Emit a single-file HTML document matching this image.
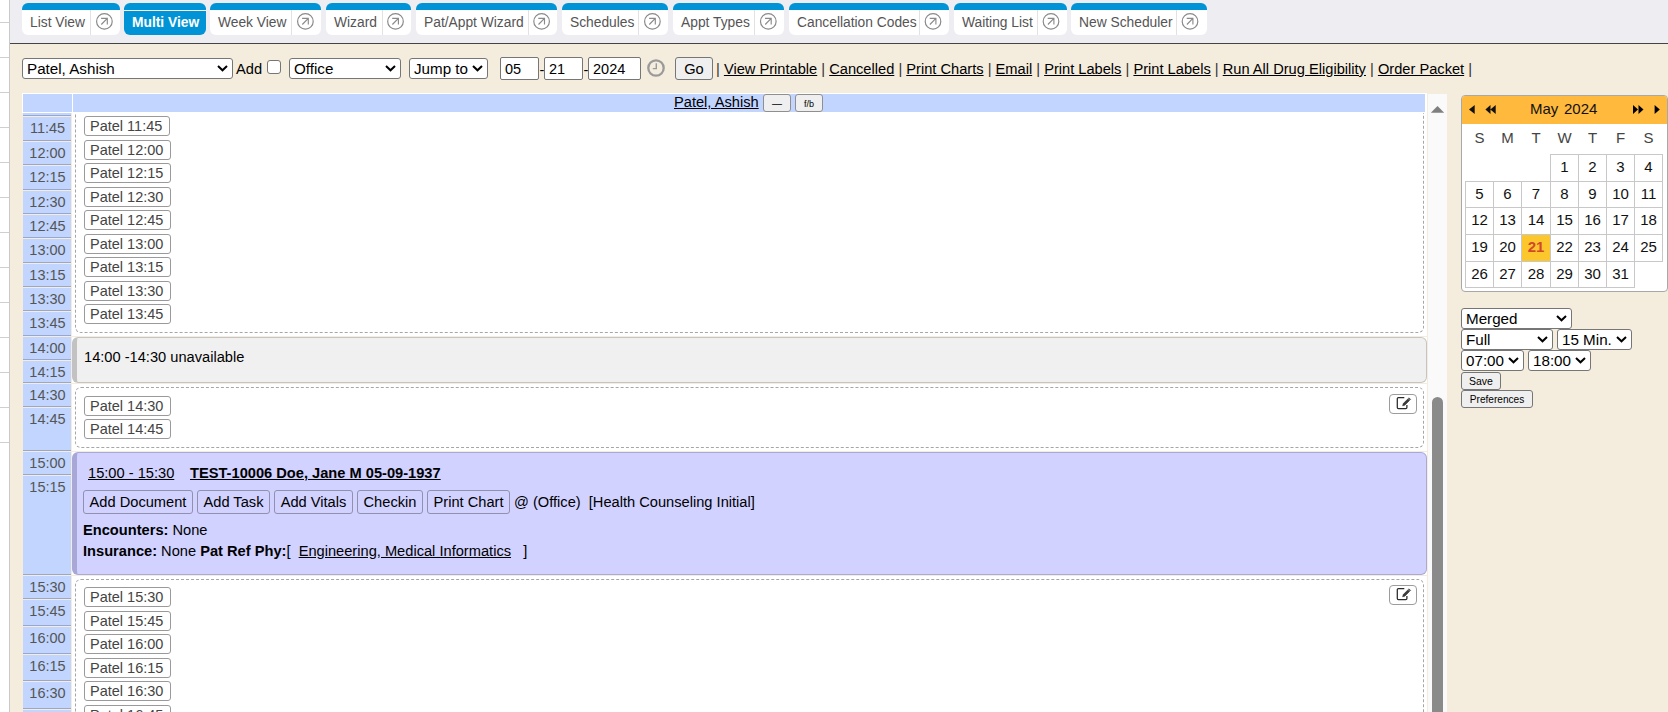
<!DOCTYPE html><html><head><meta charset="utf-8"><style>
*{box-sizing:border-box}
html,body{margin:0;padding:0}
body{width:1668px;height:712px;overflow:hidden;position:relative;background:#f4ecdd;font-family:"Liberation Sans", sans-serif;color:#000}
.a{position:absolute}
.tab{position:absolute;top:3px;height:32px;background:#fff;border-radius:6px;overflow:hidden;border-top:7px solid #0094d6}
.tab .t{position:absolute;left:8px;top:0;line-height:25px;font-size:13.8px;color:#555;white-space:nowrap}
.tab .sep{position:absolute;top:0;width:1px;height:25px;background:#e2e2e2}
.tab svg{position:absolute;top:3px}
.sel{position:absolute;background:#fff;border:1px solid #767676;border-radius:3px;font-size:14.5px;white-space:nowrap;overflow:hidden}
.sel span{position:absolute;left:5px}
.sel svg{position:absolute}
.inp{position:absolute;background:#fff;border:1px solid #767676;border-radius:2px;font-size:14.5px;white-space:nowrap}
.btn{position:absolute;background:#efefef;border:1px solid #767676;border-radius:3px;white-space:nowrap;text-align:center;color:#000}
.lnk{position:absolute;font-size:14.65px;white-space:nowrap;color:#000}
.lnk u{text-decoration:underline}
.pipe{color:#333}
.tc{position:absolute;left:23px;width:48px;background:#c1d5ff;border-bottom:1px solid #97a8cc;font-size:14.5px;color:#555;text-align:center;overflow:hidden;padding-left:1px}
.pb{position:absolute;left:84px;height:20px;background:#fff;border:1px solid #9a9a9a;border-radius:3px;font-size:14.5px;color:#444;line-height:18px;padding:0 7px 0 5px;white-space:nowrap}
.dash{position:absolute;border:1px dashed #a6a6a6;border-radius:6px;background:#fff}
.cal td{}
</style></head><body>
<div class="a" style="left:0;top:0;width:10px;height:712px;background:#fff;border-right:1px solid #c9c9c9"></div>
<div class="a" style="left:0;top:22px;width:9px;height:1px;background:#cfcfcf"></div>
<div class="a" style="left:0;top:57px;width:9px;height:1px;background:#cfcfcf"></div>
<div class="a" style="left:0;top:92px;width:9px;height:1px;background:#cfcfcf"></div>
<div class="a" style="left:0;top:127px;width:9px;height:1px;background:#cfcfcf"></div>
<div class="a" style="left:0;top:162px;width:9px;height:1px;background:#cfcfcf"></div>
<div class="a" style="left:0;top:197px;width:9px;height:1px;background:#cfcfcf"></div>
<div class="a" style="left:0;top:232px;width:9px;height:1px;background:#cfcfcf"></div>
<div class="a" style="left:0;top:267px;width:9px;height:1px;background:#cfcfcf"></div>
<div class="a" style="left:0;top:302px;width:9px;height:1px;background:#cfcfcf"></div>
<div class="a" style="left:0;top:337px;width:9px;height:1px;background:#cfcfcf"></div>
<div class="a" style="left:0;top:372px;width:9px;height:1px;background:#cfcfcf"></div>
<div class="a" style="left:0;top:407px;width:9px;height:1px;background:#cfcfcf"></div>
<div class="a" style="left:0;top:442px;width:9px;height:1px;background:#cfcfcf"></div>
<div class="a" style="left:10px;top:0;width:1658px;height:44px;background:#eeedf2;border-bottom:1px solid #444"></div>
<div class="tab" style="left:22px;width:98px"><span class="t">List View</span><div class="sep" style="left:68px"></div><svg width="19" height="19" viewBox="0 0 19 19" style="left:73px;top:2px"><g transform="translate(0.4 0.4)"><circle cx="9" cy="9" r="7.8" fill="none" stroke="#8a8a8a" stroke-width="1.2"/><path d="M5.9 12.1 L11.9 6 M5.7 6 H12.4 M11.9 5.5 V12" fill="none" stroke="#8a8a8a" stroke-width="1.15"/></g></svg></div>
<div class="tab" style="left:124px;width:82px;background:#0094d6"><div class="a" style="left:0;top:0;width:82px;height:1px;background:#fff"></div><span class="t" style="color:#fff;font-weight:bold;top:0">Multi View</span></div>
<div class="tab" style="left:210px;width:111px"><span class="t">Week View</span><div class="sep" style="left:81px"></div><svg width="19" height="19" viewBox="0 0 19 19" style="left:86px;top:2px"><g transform="translate(0.4 0.4)"><circle cx="9" cy="9" r="7.8" fill="none" stroke="#8a8a8a" stroke-width="1.2"/><path d="M5.9 12.1 L11.9 6 M5.7 6 H12.4 M11.9 5.5 V12" fill="none" stroke="#8a8a8a" stroke-width="1.15"/></g></svg></div>
<div class="tab" style="left:326px;width:85px"><span class="t">Wizard</span><div class="sep" style="left:56px"></div><svg width="19" height="19" viewBox="0 0 19 19" style="left:60px;top:2px"><g transform="translate(0.5 0.4)"><circle cx="9" cy="9" r="7.8" fill="none" stroke="#8a8a8a" stroke-width="1.2"/><path d="M5.9 12.1 L11.9 6 M5.7 6 H12.4 M11.9 5.5 V12" fill="none" stroke="#8a8a8a" stroke-width="1.15"/></g></svg></div>
<div class="tab" style="left:416px;width:141px"><span class="t">Pat/Appt Wizard</span><div class="sep" style="left:112px"></div><svg width="19" height="19" viewBox="0 0 19 19" style="left:116px;top:2px"><g transform="translate(0.6 0.4)"><circle cx="9" cy="9" r="7.8" fill="none" stroke="#8a8a8a" stroke-width="1.2"/><path d="M5.9 12.1 L11.9 6 M5.7 6 H12.4 M11.9 5.5 V12" fill="none" stroke="#8a8a8a" stroke-width="1.15"/></g></svg></div>
<div class="tab" style="left:562px;width:106px"><span class="t">Schedules</span><div class="sep" style="left:76px"></div><svg width="19" height="19" viewBox="0 0 19 19" style="left:81px;top:2px"><g transform="translate(0.4 0.4)"><circle cx="9" cy="9" r="7.8" fill="none" stroke="#8a8a8a" stroke-width="1.2"/><path d="M5.9 12.1 L11.9 6 M5.7 6 H12.4 M11.9 5.5 V12" fill="none" stroke="#8a8a8a" stroke-width="1.15"/></g></svg></div>
<div class="tab" style="left:673px;width:111px"><span class="t">Appt Types</span><div class="sep" style="left:81px"></div><svg width="19" height="19" viewBox="0 0 19 19" style="left:86px;top:2px"><g transform="translate(0.3 0.4)"><circle cx="9" cy="9" r="7.8" fill="none" stroke="#8a8a8a" stroke-width="1.2"/><path d="M5.9 12.1 L11.9 6 M5.7 6 H12.4 M11.9 5.5 V12" fill="none" stroke="#8a8a8a" stroke-width="1.15"/></g></svg></div>
<div class="tab" style="left:789px;width:160px"><span class="t">Cancellation Codes</span><div class="sep" style="left:130px"></div><svg width="19" height="19" viewBox="0 0 19 19" style="left:135px;top:2px"><g transform="translate(0 0.4)"><circle cx="9" cy="9" r="7.8" fill="none" stroke="#8a8a8a" stroke-width="1.2"/><path d="M5.9 12.1 L11.9 6 M5.7 6 H12.4 M11.9 5.5 V12" fill="none" stroke="#8a8a8a" stroke-width="1.15"/></g></svg></div>
<div class="tab" style="left:954px;width:113px"><span class="t">Waiting List</span><div class="sep" style="left:83px"></div><svg width="19" height="19" viewBox="0 0 19 19" style="left:88px;top:2px"><g transform="translate(0 0.4)"><circle cx="9" cy="9" r="7.8" fill="none" stroke="#8a8a8a" stroke-width="1.2"/><path d="M5.9 12.1 L11.9 6 M5.7 6 H12.4 M11.9 5.5 V12" fill="none" stroke="#8a8a8a" stroke-width="1.15"/></g></svg></div>
<div class="tab" style="left:1071px;width:136px"><span class="t">New Scheduler</span><div class="sep" style="left:105px"></div><svg width="19" height="19" viewBox="0 0 19 19" style="left:110px;top:2px"><g transform="translate(0 0.4)"><circle cx="9" cy="9" r="7.8" fill="none" stroke="#8a8a8a" stroke-width="1.2"/><path d="M5.9 12.1 L11.9 6 M5.7 6 H12.4 M11.9 5.5 V12" fill="none" stroke="#8a8a8a" stroke-width="1.15"/></g></svg></div>
<div class="sel" style="left:22px;top:58px;width:211px;height:21px;font-size:15.2px;line-height:19px"><span style="left:4px;top:0">Patel, Ashish</span><svg width="11" height="7" viewBox="0 0 11 7" style="left:194px;top:6.0px"><path d="M1 1 L5.5 5.3 L10 1" fill="none" stroke="#000" stroke-width="2"/></svg></div>
<div class="lnk" style="left:236px;top:59px;line-height:20px">Add</div>
<div class="a" style="left:267px;top:60px;width:14px;height:14px;border:1px solid #767676;border-radius:3px;background:#fff"></div>
<div class="sel" style="left:289px;top:58px;width:112px;height:21px;font-size:15.2px;line-height:19px"><span style="left:4px;top:0">Office</span><svg width="11" height="7" viewBox="0 0 11 7" style="left:95px;top:6.0px"><path d="M1 1 L5.5 5.3 L10 1" fill="none" stroke="#000" stroke-width="2"/></svg></div>
<div class="sel" style="left:409px;top:58px;width:79px;height:21px;font-size:15.2px;line-height:19px"><span style="left:4px;top:0">Jump to</span><svg width="11" height="7" viewBox="0 0 11 7" style="left:62px;top:6.0px"><path d="M1 1 L5.5 5.3 L10 1" fill="none" stroke="#000" stroke-width="2"/></svg></div>
<div class="inp" style="left:500px;top:57px;width:39px;height:23px;line-height:21px;padding:1px 0 0 4px">05</div>
<div class="lnk" style="left:539.5px;top:60px;line-height:20px">-</div>
<div class="inp" style="left:544px;top:57px;width:39px;height:23px;line-height:21px;padding:1px 0 0 4px">21</div>
<div class="lnk" style="left:583.5px;top:60px;line-height:20px">-</div>
<div class="inp" style="left:588px;top:57px;width:53px;height:23px;line-height:21px;padding:1px 0 0 4px">2024</div>
<svg class="a" style="left:647px;top:59px" width="18" height="18" viewBox="0 0 18 18"><circle cx="9" cy="9" r="7.7" fill="none" stroke="#9a9a9a" stroke-width="2.3"/><path d="M9.3 4.2 V9.6 H5.8" fill="none" stroke="#9a9a9a" stroke-width="1.4"/></svg>
<div class="btn" style="left:675px;top:57px;width:38px;height:23px;font-size:14.65px;line-height:22px">Go</div>
<div class="lnk" style="left:716px;top:59px;line-height:20px"><span class="pipe">|</span> <u>View Printable</u> <span class="pipe">|</span> <u>Cancelled</u> <span class="pipe">|</span> <u>Print Charts</u> <span class="pipe">|</span> <u>Email</u> <span class="pipe">|</span> <u>Print Labels</u> <span class="pipe">|</span> <u>Print Labels</u> <span class="pipe">|</span> <u>Run All Drug Eligibility</u> <span class="pipe">|</span> <u>Order Packet</u> <span class="pipe">|</span></div>
<div class="a" style="z-index:10;left:22px;top:93px;width:1405px;height:20px;background:#fff"></div>
<div class="a" style="z-index:10;left:23px;top:94px;width:49px;height:18px;background:#c1d5ff"></div>
<div class="a" style="z-index:10;left:73px;top:94px;width:1352px;height:18px;background:#c1d5ff"></div>
<div class="lnk" style="z-index:11;left:674px;top:94px;line-height:17px;font-size:14.65px"><u>Patel, Ashish</u></div>
<div class="btn" style="z-index:11;left:763px;top:94px;width:28px;height:18px;font-size:10px;line-height:18px;border-color:#8f8f8f">&#8212;</div>
<div class="btn" style="z-index:11;left:795px;top:94px;width:28px;height:18px;font-size:9px;line-height:18px;border-color:#8f8f8f">f/b</div>
<div class="tc" style="top:113px;height:3px"></div>
<div class="tc" style="top:117px;height:24px;line-height:17px;padding-top:3px">11:45</div>
<div class="tc" style="top:142px;height:23px;line-height:17px;padding-top:3px">12:00</div>
<div class="tc" style="top:166px;height:24px;line-height:17px;padding-top:3px">12:15</div>
<div class="tc" style="top:191px;height:23px;line-height:17px;padding-top:3px">12:30</div>
<div class="tc" style="top:215px;height:23px;line-height:17px;padding-top:3px">12:45</div>
<div class="tc" style="top:239px;height:24px;line-height:17px;padding-top:3px">13:00</div>
<div class="tc" style="top:264px;height:23px;line-height:17px;padding-top:3px">13:15</div>
<div class="tc" style="top:288px;height:23px;line-height:17px;padding-top:3px">13:30</div>
<div class="tc" style="top:312px;height:24px;line-height:17px;padding-top:3px">13:45</div>
<div class="tc" style="top:337px;height:23px;line-height:17px;padding-top:3px">14:00</div>
<div class="tc" style="top:361px;height:22px;line-height:17px;padding-top:3px">14:15</div>
<div class="tc" style="top:384px;height:23px;line-height:17px;padding-top:3px">14:30</div>
<div class="tc" style="top:408px;height:43px;line-height:17px;padding-top:3px">14:45</div>
<div class="tc" style="top:452px;height:23px;line-height:17px;padding-top:3px">15:00</div>
<div class="tc" style="top:476px;height:99px;line-height:17px;padding-top:3px">15:15</div>
<div class="tc" style="top:576px;height:23px;line-height:17px;padding-top:3px">15:30</div>
<div class="tc" style="top:600px;height:26px;line-height:17px;padding-top:3px">15:45</div>
<div class="tc" style="top:627px;height:27px;line-height:17px;padding-top:3px">16:00</div>
<div class="tc" style="top:655px;height:26px;line-height:17px;padding-top:3px">16:15</div>
<div class="tc" style="top:682px;height:27px;line-height:17px;padding-top:3px">16:30</div>
<div class="tc" style="top:710px;height:7px;line-height:17px;padding-top:3px">16:45</div>
<div class="a" style="left:72px;top:113px;width:1355px;height:223px;background:#fff"></div>
<div class="a" style="left:72px;top:337px;width:1355px;height:46px;background:#fff"></div>
<div class="a" style="left:72px;top:384px;width:1355px;height:67px;background:#fff"></div>
<div class="a" style="left:72px;top:452px;width:1355px;height:123px;background:#fff"></div>
<div class="a" style="left:72px;top:576px;width:1355px;height:136px;background:#fff"></div>
<div class="dash" style="left:75px;top:100px;width:1349px;height:233px"></div>
<div class="pb" style="top:116px">Patel 11:45</div>
<div class="pb" style="top:140px">Patel 12:00</div>
<div class="pb" style="top:163px">Patel 12:15</div>
<div class="pb" style="top:187px">Patel 12:30</div>
<div class="pb" style="top:210px">Patel 12:45</div>
<div class="pb" style="top:234px">Patel 13:00</div>
<div class="pb" style="top:257px">Patel 13:15</div>
<div class="pb" style="top:281px">Patel 13:30</div>
<div class="pb" style="top:304px">Patel 13:45</div>
<div class="a" style="left:72px;top:337px;width:1355px;height:46px;background:#f0f0f0;border:1px solid #c4c4c4;border-left:5px solid #c2c2c2;border-radius:6px;font-size:14.65px;line-height:17px;padding:11px 0 0 7px;color:#000">14:00 -14:30 unavailable</div>
<div class="dash" style="left:75px;top:387px;width:1349px;height:61px"></div>
<div class="pb" style="top:396px">Patel 14:30</div>
<div class="pb" style="top:419px">Patel 14:45</div>
<div class="a" style="left:1389px;top:394px;width:28px;height:20px;border:1px solid #9c9c9c;border-radius:4px;background:#fff"><svg class="a" style="left:5px;top:0px" width="18" height="16" viewBox="0 0 18 16"><path d="M9.3 2.5 H3.4 Q2.3 2.5 2.3 3.6 V12.6 Q2.3 13.7 3.4 13.7 H10.8 Q11.9 13.7 11.9 12.6 V10" fill="none" stroke="#2a2a2a" stroke-width="1.25"/><path d="M7.6 10.8 L8.2 8.6 L14 2.8 L15.6 4.4 L9.8 10.2 Z" fill="#3a3a3a" stroke="#2a2a2a" stroke-width="0.5"/><path d="M13.2 3.6 L14.8 5.2" stroke="#cfcfcf" stroke-width="0.7"/></svg></div>
<div class="a" style="left:72px;top:452px;width:1355px;height:123px;background:#d1d2ff;border:1px solid #a9a8d9;border-left:5px solid #a9a7d6;border-radius:6px;font-size:14.65px;color:#000"></div>
<div class="lnk" style="left:88px;top:465px;line-height:17px"><u>15:00 - 15:30</u></div>
<div class="lnk" style="left:190px;top:465px;line-height:17px;font-weight:bold"><u>TEST-10006 Doe, Jane M 05-09-1937</u></div>
<div class="btn" style="left:83px;top:490px;width:110px;height:24px;font-size:14.65px;line-height:22px;border-color:#9291ad;background:transparent">Add Document</div>
<div class="btn" style="left:197px;top:490px;width:73px;height:24px;font-size:14.65px;line-height:22px;border-color:#9291ad;background:transparent">Add Task</div>
<div class="btn" style="left:274px;top:490px;width:79px;height:24px;font-size:14.65px;line-height:22px;border-color:#9291ad;background:transparent">Add Vitals</div>
<div class="btn" style="left:357px;top:490px;width:66px;height:24px;font-size:14.65px;line-height:22px;border-color:#9291ad;background:transparent">Checkin</div>
<div class="btn" style="left:427px;top:490px;width:83px;height:24px;font-size:14.65px;line-height:22px;border-color:#9291ad;background:transparent">Print Chart</div>
<div class="lnk" style="left:514px;top:494px;line-height:17px">@ (Office)&nbsp; [Health Counseling Initial]</div>
<div class="lnk" style="left:83px;top:522px;line-height:17px"><b>Encounters:</b> None</div>
<div class="lnk" style="left:83px;top:543px;line-height:17px"><b>Insurance:</b> None <b>Pat Ref Phy:</b>[&nbsp; <u>Engineering, Medical Informatics</u>&nbsp;&nbsp; ]</div>
<div class="dash" style="left:75px;top:579px;width:1349px;height:200px"></div>
<div class="pb" style="top:587px">Patel 15:30</div>
<div class="pb" style="top:611px">Patel 15:45</div>
<div class="pb" style="top:634px">Patel 16:00</div>
<div class="pb" style="top:658px">Patel 16:15</div>
<div class="pb" style="top:681px">Patel 16:30</div>
<div class="pb" style="top:705px">Patel 16:45</div>
<div class="a" style="left:1389px;top:585px;width:28px;height:20px;border:1px solid #9c9c9c;border-radius:4px;background:#fff"><svg class="a" style="left:5px;top:0px" width="18" height="16" viewBox="0 0 18 16"><path d="M9.3 2.5 H3.4 Q2.3 2.5 2.3 3.6 V12.6 Q2.3 13.7 3.4 13.7 H10.8 Q11.9 13.7 11.9 12.6 V10" fill="none" stroke="#2a2a2a" stroke-width="1.25"/><path d="M7.6 10.8 L8.2 8.6 L14 2.8 L15.6 4.4 L9.8 10.2 Z" fill="#3a3a3a" stroke="#2a2a2a" stroke-width="0.5"/><path d="M13.2 3.6 L14.8 5.2" stroke="#cfcfcf" stroke-width="0.7"/></svg></div>
<div class="a" style="left:1428px;top:94px;width:19px;height:618px;background:#fafafa"></div>
<svg class="a" style="left:1428px;top:94px" width="19" height="22" viewBox="0 0 19 22"><path d="M2.8 18.8 L9.5 12 L16.2 18.8 Z" fill="#7f7f7f"/></svg>
<div class="a" style="left:1432px;top:397px;width:11px;height:330px;background:#8a8a8a;border-radius:5.5px"></div>
<div class="a" style="left:1461px;top:95px;width:207px;height:197px;background:#fff;border:1px solid #a8a8a8;border-radius:4px;overflow:hidden"><div class="a" style="left:0;top:0;width:205px;height:28px;background:#ffb93d"></div></div>
<svg class="a" style="left:1461px;top:95px" width="206" height="28" viewBox="0 0 206 28"><path d="M8 14.5 L13.7 10 V19 Z" fill="#111"/><path d="M24.4 14.5 L29.5 10 V19 Z M29.4 14.5 L34.7 10 V19 Z" fill="#111"/><path d="M172 10 L177 14.5 L172 19 Z M177.5 10 L182.5 14.5 L177.5 19 Z" fill="#000"/><path d="M193.6 10 L198.8 14.5 L193.6 19 Z" fill="#000"/></svg>
<div class="a" style="left:1530px;top:95px;font-size:15px;line-height:28px;color:#111;white-space:pre">May</div>
<div class="a" style="left:1564px;top:95px;font-size:15px;line-height:28px;color:#111;white-space:pre">2024</div>
<div class="a" style="left:1465px;top:128px;width:29px;text-align:center;font-size:15px;line-height:20px;color:#444">S</div>
<div class="a" style="left:1493px;top:128px;width:29px;text-align:center;font-size:15px;line-height:20px;color:#444">M</div>
<div class="a" style="left:1521px;top:128px;width:30px;text-align:center;font-size:15px;line-height:20px;color:#444">T</div>
<div class="a" style="left:1550px;top:128px;width:29px;text-align:center;font-size:15px;line-height:20px;color:#444">W</div>
<div class="a" style="left:1578px;top:128px;width:29px;text-align:center;font-size:15px;line-height:20px;color:#444">T</div>
<div class="a" style="left:1606px;top:128px;width:29px;text-align:center;font-size:15px;line-height:20px;color:#444">F</div>
<div class="a" style="left:1634px;top:128px;width:29px;text-align:center;font-size:15px;line-height:20px;color:#444">S</div>
<div class="a" style="left:1550px;top:154px;width:29px;height:28px;border:1px solid #c8c8c8;background:#fff;text-align:center;font-size:15px;line-height:24px;color:#111;font-weight:normal">1</div>
<div class="a" style="left:1578px;top:154px;width:29px;height:28px;border:1px solid #c8c8c8;background:#fff;text-align:center;font-size:15px;line-height:24px;color:#111;font-weight:normal">2</div>
<div class="a" style="left:1606px;top:154px;width:29px;height:28px;border:1px solid #c8c8c8;background:#fff;text-align:center;font-size:15px;line-height:24px;color:#111;font-weight:normal">3</div>
<div class="a" style="left:1634px;top:154px;width:29px;height:28px;border:1px solid #c8c8c8;background:#fff;text-align:center;font-size:15px;line-height:24px;color:#111;font-weight:normal">4</div>
<div class="a" style="left:1465px;top:181px;width:29px;height:27px;border:1px solid #c8c8c8;background:#fff;text-align:center;font-size:15px;line-height:23px;color:#111;font-weight:normal">5</div>
<div class="a" style="left:1493px;top:181px;width:29px;height:27px;border:1px solid #c8c8c8;background:#fff;text-align:center;font-size:15px;line-height:23px;color:#111;font-weight:normal">6</div>
<div class="a" style="left:1521px;top:181px;width:30px;height:27px;border:1px solid #c8c8c8;background:#fff;text-align:center;font-size:15px;line-height:23px;color:#111;font-weight:normal">7</div>
<div class="a" style="left:1550px;top:181px;width:29px;height:27px;border:1px solid #c8c8c8;background:#fff;text-align:center;font-size:15px;line-height:23px;color:#111;font-weight:normal">8</div>
<div class="a" style="left:1578px;top:181px;width:29px;height:27px;border:1px solid #c8c8c8;background:#fff;text-align:center;font-size:15px;line-height:23px;color:#111;font-weight:normal">9</div>
<div class="a" style="left:1606px;top:181px;width:29px;height:27px;border:1px solid #c8c8c8;background:#fff;text-align:center;font-size:15px;line-height:23px;color:#111;font-weight:normal">10</div>
<div class="a" style="left:1634px;top:181px;width:29px;height:27px;border:1px solid #c8c8c8;background:#fff;text-align:center;font-size:15px;line-height:23px;color:#111;font-weight:normal">11</div>
<div class="a" style="left:1465px;top:207px;width:29px;height:28px;border:1px solid #c8c8c8;background:#fff;text-align:center;font-size:15px;line-height:24px;color:#111;font-weight:normal">12</div>
<div class="a" style="left:1493px;top:207px;width:29px;height:28px;border:1px solid #c8c8c8;background:#fff;text-align:center;font-size:15px;line-height:24px;color:#111;font-weight:normal">13</div>
<div class="a" style="left:1521px;top:207px;width:30px;height:28px;border:1px solid #c8c8c8;background:#fff;text-align:center;font-size:15px;line-height:24px;color:#111;font-weight:normal">14</div>
<div class="a" style="left:1550px;top:207px;width:29px;height:28px;border:1px solid #c8c8c8;background:#fff;text-align:center;font-size:15px;line-height:24px;color:#111;font-weight:normal">15</div>
<div class="a" style="left:1578px;top:207px;width:29px;height:28px;border:1px solid #c8c8c8;background:#fff;text-align:center;font-size:15px;line-height:24px;color:#111;font-weight:normal">16</div>
<div class="a" style="left:1606px;top:207px;width:29px;height:28px;border:1px solid #c8c8c8;background:#fff;text-align:center;font-size:15px;line-height:24px;color:#111;font-weight:normal">17</div>
<div class="a" style="left:1634px;top:207px;width:29px;height:28px;border:1px solid #c8c8c8;background:#fff;text-align:center;font-size:15px;line-height:24px;color:#111;font-weight:normal">18</div>
<div class="a" style="left:1465px;top:234px;width:29px;height:28px;border:1px solid #c8c8c8;background:#fff;text-align:center;font-size:15px;line-height:24px;color:#111;font-weight:normal">19</div>
<div class="a" style="left:1493px;top:234px;width:29px;height:28px;border:1px solid #c8c8c8;background:#fff;text-align:center;font-size:15px;line-height:24px;color:#111;font-weight:normal">20</div>
<div class="a" style="left:1521px;top:234px;width:30px;height:28px;border:1px solid #c8c8c8;background:#fcc72c;text-align:center;font-size:15px;line-height:24px;color:#d2482b;font-weight:bold">21</div>
<div class="a" style="left:1550px;top:234px;width:29px;height:28px;border:1px solid #c8c8c8;background:#fff;text-align:center;font-size:15px;line-height:24px;color:#111;font-weight:normal">22</div>
<div class="a" style="left:1578px;top:234px;width:29px;height:28px;border:1px solid #c8c8c8;background:#fff;text-align:center;font-size:15px;line-height:24px;color:#111;font-weight:normal">23</div>
<div class="a" style="left:1606px;top:234px;width:29px;height:28px;border:1px solid #c8c8c8;background:#fff;text-align:center;font-size:15px;line-height:24px;color:#111;font-weight:normal">24</div>
<div class="a" style="left:1634px;top:234px;width:29px;height:28px;border:1px solid #c8c8c8;background:#fff;text-align:center;font-size:15px;line-height:24px;color:#111;font-weight:normal">25</div>
<div class="a" style="left:1465px;top:261px;width:29px;height:27px;border:1px solid #c8c8c8;background:#fff;text-align:center;font-size:15px;line-height:23px;color:#111;font-weight:normal">26</div>
<div class="a" style="left:1493px;top:261px;width:29px;height:27px;border:1px solid #c8c8c8;background:#fff;text-align:center;font-size:15px;line-height:23px;color:#111;font-weight:normal">27</div>
<div class="a" style="left:1521px;top:261px;width:30px;height:27px;border:1px solid #c8c8c8;background:#fff;text-align:center;font-size:15px;line-height:23px;color:#111;font-weight:normal">28</div>
<div class="a" style="left:1550px;top:261px;width:29px;height:27px;border:1px solid #c8c8c8;background:#fff;text-align:center;font-size:15px;line-height:23px;color:#111;font-weight:normal">29</div>
<div class="a" style="left:1578px;top:261px;width:29px;height:27px;border:1px solid #c8c8c8;background:#fff;text-align:center;font-size:15px;line-height:23px;color:#111;font-weight:normal">30</div>
<div class="a" style="left:1606px;top:261px;width:29px;height:27px;border:1px solid #c8c8c8;background:#fff;text-align:center;font-size:15px;line-height:23px;color:#111;font-weight:normal">31</div>
<div class="sel" style="left:1461px;top:308px;width:111px;height:21px;font-size:15.2px;line-height:19px"><span style="left:4px;top:0">Merged</span><svg width="11" height="7" viewBox="0 0 11 7" style="left:94px;top:6.0px"><path d="M1 1 L5.5 5.3 L10 1" fill="none" stroke="#000" stroke-width="2"/></svg></div>
<div class="sel" style="left:1461px;top:329px;width:92px;height:21px;font-size:15.2px;line-height:19px"><span style="left:4px;top:0">Full</span><svg width="11" height="7" viewBox="0 0 11 7" style="left:75px;top:6.0px"><path d="M1 1 L5.5 5.3 L10 1" fill="none" stroke="#000" stroke-width="2"/></svg></div>
<div class="sel" style="left:1557px;top:329px;width:75px;height:21px;font-size:15.2px;line-height:19px"><span style="left:4px;top:0">15 Min.</span><svg width="11" height="7" viewBox="0 0 11 7" style="left:58px;top:6.0px"><path d="M1 1 L5.5 5.3 L10 1" fill="none" stroke="#000" stroke-width="2"/></svg></div>
<div class="sel" style="left:1461px;top:350px;width:63px;height:21px;font-size:15.2px;line-height:19px"><span style="left:4px;top:0">07:00</span><svg width="11" height="7" viewBox="0 0 11 7" style="left:46px;top:6.0px"><path d="M1 1 L5.5 5.3 L10 1" fill="none" stroke="#000" stroke-width="2"/></svg></div>
<div class="sel" style="left:1528px;top:350px;width:63px;height:21px;font-size:15.2px;line-height:19px"><span style="left:4px;top:0">18:00</span><svg width="11" height="7" viewBox="0 0 11 7" style="left:46px;top:6.0px"><path d="M1 1 L5.5 5.3 L10 1" fill="none" stroke="#000" stroke-width="2"/></svg></div>
<div class="btn" style="left:1461px;top:372px;width:40px;height:18px;font-size:10.5px;line-height:16px">Save</div>
<div class="btn" style="left:1461px;top:390px;width:72px;height:18px;font-size:10.1px;line-height:18px">Preferences</div>
</body></html>
